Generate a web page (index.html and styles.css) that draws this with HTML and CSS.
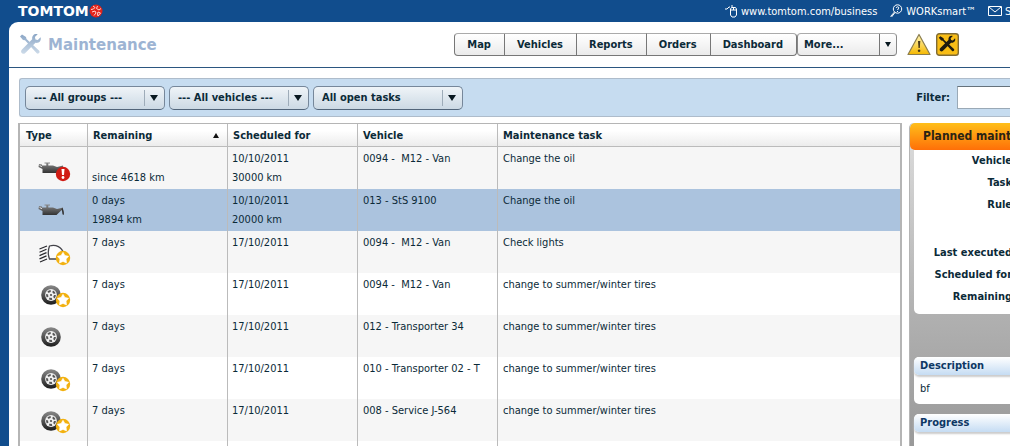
FILE: index.html
```html
<!DOCTYPE html>
<html lang="en">
<head>
<meta charset="utf-8">
<title>Maintenance</title>
<link rel="stylesheet" href="styles.css">
</head>
<body>
<svg class="defs" aria-hidden="true">
  <defs>
    <linearGradient id="metal" x1="0" y1="0" x2="0" y2="1"><stop offset="0" stop-color="#8a8a8a"/><stop offset="1" stop-color="#333"/></linearGradient>
    <linearGradient id="tyre" x1="0" y1="0" x2="0" y2="1"><stop offset="0" stop-color="#8a8a8a"/><stop offset="1" stop-color="#1c1c1c"/></linearGradient>
    <linearGradient id="gold" x1="0" y1="0" x2="0" y2="1"><stop offset="0" stop-color="#fff6b8"/><stop offset="1" stop-color="#f5b800"/></linearGradient>
    <linearGradient id="steel" x1="0" y1="0" x2="0" y2="1"><stop offset="0" stop-color="#8ba6c6"/><stop offset="1" stop-color="#cddbe9"/></linearGradient>
    <symbol id="oil" viewBox="0 0 34 28">
      <path d="M5 9.500h4.300V7.500H7.500v-1H13v1h-1.700v2H16l4 1.500 6-1.500v1.300L19.500 17H5.500v-4L1.500 11l.5-3 3 .5z" fill="url(#metal)"/>
      <path d="M2.600 9.500 5 10.700" stroke="#e4e4e4"/>
    </symbol>
    <symbol id="drop" viewBox="0 0 34 28"><path d="M25.500 10c1.500 2.500 2 7 .8 7s-.8-4-2-6z" fill="#333"/></symbol>
    <symbol id="lamp" viewBox="0 0 34 28">
      <path d="M12.500 6c6-2 13 1 14 8 0 3-2 5-5 5h-9c-1.500-4-1.500-9 0-13z" fill="#fdfdfd" stroke="#45454b" stroke-width="1.300"/>
      <path d="M2.500 9 10 6M2.500 12.300l7-3M2.500 15.600l7-3M2.500 18.900l7-3M3 22l7-3" stroke="#29292e" stroke-width="1.200"/>
    </symbol>
    <symbol id="wheel" viewBox="0 0 34 28">
      <circle cx="14" cy="13" r="9.800" fill="url(#tyre)"/>
      <circle cx="14" cy="13" r="5.900" fill="#f0f0f0"/>
      <circle cx="14" cy="13" r="3.900" fill="none" stroke="#555" stroke-width="2" stroke-dasharray="2.900 2"/>
      <circle cx="14" cy="13" r="1.100" fill="#555"/>
    </symbol>
    <symbol id="star" viewBox="0 0 34 28">
      <circle cx="26" cy="18" r="7.200" fill="#f2b110"/>
      <path d="m26 12.300 1.900 3.200 3.700.8-2.500 2.800.4 3.800-3.500-1.500-3.500 1.500.4-3.800-2.500-2.800 3.700-.8z" fill="#fff" stroke="#fff" stroke-width=".6" stroke-linejoin="round"/>
    </symbol>
    <symbol id="alert" viewBox="0 0 34 28">
      <circle cx="26" cy="18" r="7.200" fill="#d01c14"/>
      <path d="M24.500 13h3l-.5 6h-2z" fill="#fff"/><circle cx="26" cy="21.500" r="1.400" fill="#fff"/>
    </symbol>
    <symbol id="tools" viewBox="0 0 24 24">
      <path d="M3 1.500 1 3.500 4 7l2 .3L17.500 20c1.600 1.700 4-.3 2.700-2.200L7.500 6 7 4z"/>
      <path d="M21.500 4.200 18.800 7l-2.300-.6-.6-2.300 2.800-2.800c-3-1-6 1-5.500 5L3 16.500c-2.500 2.300.8 6 3.300 3.400L16.500 9.800c3.700.7 6.200-2.500 5-5.600z"/>
    </symbol>
  </defs>
</svg>

<header class="topbar">
  <a class="logo" href="#">TOMTOM<svg width="14" height="14" viewBox="0 0 14 14" aria-hidden="true"><circle cx="7" cy="7" r="6.500" fill="#e2231a"/><path d="m4 2 2 1.500L4.500 5 2 5.500M8.500 2l-1 2.500L10 6l2-1.500M3 8l3-1 1 2-2 2.500M9 8l2.500 1L9 12l-.5-2z" fill="none" stroke="#ffd3cf" stroke-width="1"/></svg></a>
  <nav class="toplinks">
    <a href="#"><svg width="14" height="14" viewBox="0 0 14 14" aria-hidden="true"><path d="M1 5h2l2-2h1M8 3.500V1M6 6h6.500M9.500 3.500V6M7.500 3.500h4l1 1.500v6l-1.500 2H8l-1.500-2V5z"/></svg>www.tomtom.com/business</a>
    <a href="#"><svg width="14" height="14" viewBox="0 0 14 14" aria-hidden="true"><circle cx="8.500" cy="5" r="4.200"/><path d="M5.500 8 1.500 12.500M6 8.500 2.500 13M7.200 4c.2-1.700 2.700-1.500 2.600 0 0 .8-1.200.9-1.200 2M8.500 7v1"/></svg>WORKsmart™</a>
    <a href="#"><svg width="14" height="14" viewBox="0 0 14 14" aria-hidden="true"><path d="M.5 2.500h13v9H.5zM1 3l6 5 6-5"/></svg>S</a>
  </nav>
</header>

<main class="page">
  <div class="titlebar">
    <h1><svg width="24" height="24" fill="url(#steel)" aria-hidden="true"><use href="#tools"/></svg>Maintenance</h1>
    <nav class="tabs">
      <button type="button">Map</button><button type="button">Vehicles</button><button type="button">Reports</button><button type="button">Orders</button><button type="button">Dashboard</button>
      <span class="picker more"><select aria-label="More pages"><option>More...</option></select></span>
    </nav>
    <div class="status">
      <button type="button" aria-label="Warnings"><svg width="24" height="23" viewBox="0 0 24 23"><path d="M12 1.500 23 21.500H1z" fill="url(#gold)" stroke="#8b7d4d" stroke-width="1.200" stroke-linejoin="round"/><path d="M11 8h2.300l-.5 7h-1.300z" fill="#4a3a18"/><circle cx="12.100" cy="17.800" r="1.300" fill="#4a3a18"/></svg></button>
      <button type="button" aria-label="Maintenance alerts"><svg width="23" height="23" viewBox="0 0 23 23"><rect x=".7" y=".7" width="21.600" height="21.600" rx="2.500" fill="#f8bd16" stroke="#806c35" stroke-width="1.400"/><use href="#tools" x="2" y="2" width="19" height="19" fill="#1d1a10"/></svg></button>
    </div>
  </div>

  <form class="filters">
    <span class="picker"><select aria-label="Group"><option>--- All groups ---</option></select></span>
    <span class="picker"><select aria-label="Vehicle"><option>--- All vehicles ---</option></select></span>
    <span class="picker wide"><select aria-label="Tasks"><option>All open tasks</option></select></span>
    <label class="search" for="filter">Filter:</label>
    <input id="filter" type="text">
  </form>

  <div class="content">
    <div class="grid">
      <table>
        <colgroup><col class="c-type"><col class="c-rem"><col class="c-sched"><col class="c-veh"><col></colgroup>
        <thead><tr><th>Type</th><th><span class="sorted">Remaining<i></i></span></th><th>Scheduled for</th><th>Vehicle</th><th>Maintenance task</th></tr></thead>
        <tbody>
          <tr><td><svg class="icon"><use href="#oil"/><use href="#alert"/></svg></td><td><br>since 4618 km</td><td>10/10/2011<br>30000 km</td><td>0094 -&nbsp; M12 - Van</td><td>Change the oil</td></tr>
          <tr class="selected"><td><svg class="icon"><use href="#oil"/><use href="#drop"/></svg></td><td>0 days<br>19894 km</td><td>10/10/2011<br>20000 km</td><td>013 - StS 9100</td><td>Change the oil</td></tr>
          <tr><td><svg class="icon"><use href="#lamp"/><use href="#star"/></svg></td><td>7 days</td><td>17/10/2011</td><td>0094 -&nbsp; M12 - Van</td><td>Check lights</td></tr>
          <tr><td><svg class="icon"><use href="#wheel"/><use href="#star"/></svg></td><td>7 days</td><td>17/10/2011</td><td>0094 -&nbsp; M12 - Van</td><td>change to summer/winter tires</td></tr>
          <tr><td><svg class="icon"><use href="#wheel"/></svg></td><td>7 days</td><td>17/10/2011</td><td>012 - Transporter 34</td><td>change to summer/winter tires</td></tr>
          <tr><td><svg class="icon"><use href="#wheel"/><use href="#star"/></svg></td><td>7 days</td><td>17/10/2011</td><td>010 - Transporter 02 - T</td><td>change to summer/winter tires</td></tr>
          <tr><td><svg class="icon"><use href="#wheel"/><use href="#star"/></svg></td><td>7 days</td><td>17/10/2011</td><td>008 - Service J-564</td><td>change to summer/winter tires</td></tr>
          <tr><td></td><td></td><td></td><td></td><td></td></tr>
        </tbody>
      </table>
    </div>
    <aside class="side">
      <div class="side-inner">
        <h2 class="plan-title">Planned maintenance</h2>
        <dl class="plan">
          <dt>Vehicle:</dt><dt>Task:</dt><dt class="rule">Rule:</dt><dt>Last executed:</dt><dt>Scheduled for:</dt><dt>Remaining:</dt>
        </dl>
        <section class="card"><h3>Description</h3><p>bf</p></section>
        <section class="card"><h3>Progress</h3><p></p></section>
      </div>
    </aside>
  </div>
</main>
</body>
</html>
```
FILE: styles.css
```css
* { box-sizing: border-box; }
html, body { height: 100%; }
body {
  margin: 0;
  display: flex;
  flex-direction: column;
  overflow: hidden;
  background: #114d8d;
  color: #0b2a38;
  font: 11px/19px "DejaVu Sans Condensed", "DejaVu Sans", sans-serif;
}
.defs { position: absolute; width: 0; height: 0; }
h1, h2, h3, p, dl { margin: 0; }
button, select, input { font: inherit; color: inherit; }

.topbar {
  flex: none;
  display: flex;
  justify-content: space-between;
  align-items: center;
  height: 22px;
  padding-left: 18px;
  color: #fff;
  overflow: hidden;
}
.topbar a { color: inherit; text-decoration: none; display: flex; align-items: center; }
.logo { font: bold 14px/20px "DejaVu Sans", sans-serif; }
.toplinks { display: flex; gap: 12px; width: 286px; white-space: nowrap; }
.toplinks a { gap: 3px; flex: none; }
.toplinks svg { fill: none; stroke: #fff; }

.page {
  flex: 1;
  min-height: 0;
  display: flex;
  flex-direction: column;
  margin-left: 9px;
  background: #fff;
  border-top-left-radius: 9px;
}
.titlebar {
  flex: none;
  display: flex;
  align-items: center;
  height: 46px;
  padding: 0 51px 0 10px;
  border-bottom: 1px solid #2b5680;
}
h1 {
  flex: 1;
  display: flex;
  align-items: center;
  gap: 5px;
  color: #9db4d3;
  font: bold 15px/24px "DejaVu Sans", sans-serif;
}
.tabs { display: flex; font-weight: bold; }
.tabs button {
  height: 23px;
  padding: 0 13px 0 12px;
  border: 1px solid #777;
  border-top-color: #aaa;
  border-left-width: 0;
  background: linear-gradient(#fff, #ebebeb);
}
.tabs button:first-child { border-left-width: 1px; border-radius: 4px 0 0 4px; }
.tabs button:last-of-type { border-radius: 0 4px 4px 0; }
.status { display: flex; gap: 5px; margin-left: 10px; }
.status button { display: flex; padding: 0; border: 0; background: none; }

.picker { position: relative; display: block; width: 140px; height: 24px; }
.picker.wide { width: 150px; }
.picker select {
  width: 100%;
  height: 100%;
  padding: 0 24px 0 8px;
  border: 1px solid #76879a;
  border-bottom-color: #52657a;
  border-radius: 5px;
  appearance: none;
  background: linear-gradient(#eff4f8, #ccd9e4);
  font-weight: bold;
}
.picker::before {
  content: "";
  position: absolute;
  top: 4px;
  bottom: 4px;
  right: 20px;
  border-left: 1px solid #9eacb9;
  pointer-events: none;
}
.picker::after {
  content: "";
  position: absolute;
  top: 9px;
  right: 7px;
  border: 4px solid transparent;
  border-top: 6px solid #081820;
  border-bottom: 0;
  pointer-events: none;
}
.picker.more { width: 100px; height: 23px; }
.picker.more select { padding-left: 6px; background: linear-gradient(#fff, #ebebeb); border-color: #aaa #888 #777; border-radius: 4px; }
.picker.more::before { top: 1px; bottom: 1px; right: 17px; border-color: #777; }
.picker.more::after { right: 6px; border-width: 5px 3px 0; }

.filters {
  flex: none;
  display: flex;
  align-items: center;
  gap: 4px;
  height: 39px;
  margin: 10px 0 6px 10px;
  padding-left: 5px;
  border: 1px solid #aebccb;
  border-right: 0;
  border-radius: 3px 0 0 3px;
  background: #c6dcf0;
}
.search { margin-left: auto; padding-right: 3px; font-weight: bold; }
.filters input { width: 53px; height: 23px; border: 1px solid #9aa9b6; border-top-color: #66727c; border-right: 0; background: #fff; }

.content { flex: 1; min-height: 0; display: flex; gap: 7px; padding-left: 9px; }
.grid { flex: 1; min-width: 0; overflow: hidden; border: solid #b5b5b5; border-width: 1px 2px 0; }
table { width: 100%; table-layout: fixed; border-collapse: separate; border-spacing: 0; white-space: nowrap; }
.c-type { width: 68px; }
.c-rem { width: 140px; }
.c-sched { width: 130px; }
.c-veh { width: 140px; }
th {
  height: 23px;
  padding: 0 5px;
  text-align: left;
  border-bottom: 1px solid #bbb;
  background: linear-gradient(#fff 30%, #ececec);
}
th, td { border-right: 1px solid #bbb; }
th:last-child, td:last-child { border-right: 0; }
.sorted { display: flex; justify-content: space-between; align-items: center; }
.sorted i { border: 3px solid transparent; border-bottom: 5px solid #111; border-top: 0; margin-right: 3px; }
td { height: 42px; padding: 2px 5px; vertical-align: top; overflow: hidden; }
th:first-child { padding-left: 6px; }
td:nth-child(2), td:nth-child(3) { padding-left: 4px; }
td:first-child { padding: 9px 0 0 17px; }
tbody tr:nth-child(odd) { background: #f6f6f6; }
tbody tr.selected { background: #abc3de; }
.icon { display: block; width: 34px; height: 28px; }

.side { flex: 0 0 101px; overflow: hidden; background: linear-gradient(#dedede, #b0b0b0 60%, #999); border-left: 1px solid #b5b5b5; border-radius: 5px 0 0 0; }
.side-inner { width: 300px; }
.plan-title {
  height: 27px;
  padding-left: 13px;
  border-radius: 5px 0 0 5px;
  background: linear-gradient(#ffbf1a, #ff6f08);
  color: #2a2414;
  font-size: 12px;
  line-height: 26px;
}
.plan {
  margin-left: 4px;
  padding: 0 194px 6px 0;
  background: #fff;
  border-bottom-left-radius: 5px;
  text-align: right;
  font-weight: bold;
  line-height: 22px;
  white-space: nowrap;
}
.plan .rule { margin-bottom: 26px; }
.card { margin: 0 0 10px 4px; background: #fff; border-radius: 5px; }
.plan + .card { margin-top: 43px; }
.card h3 {
  padding-left: 6px;
  border-radius: 5px;
  background: linear-gradient(#fff, #c5dcf3);
  box-shadow: 0 2px 2px #ccc;
  color: #0d3764;
  font-size: 11px;
  line-height: 18px;
}
.card p { min-height: 29px; padding: 4px 6px 6px; }
```
